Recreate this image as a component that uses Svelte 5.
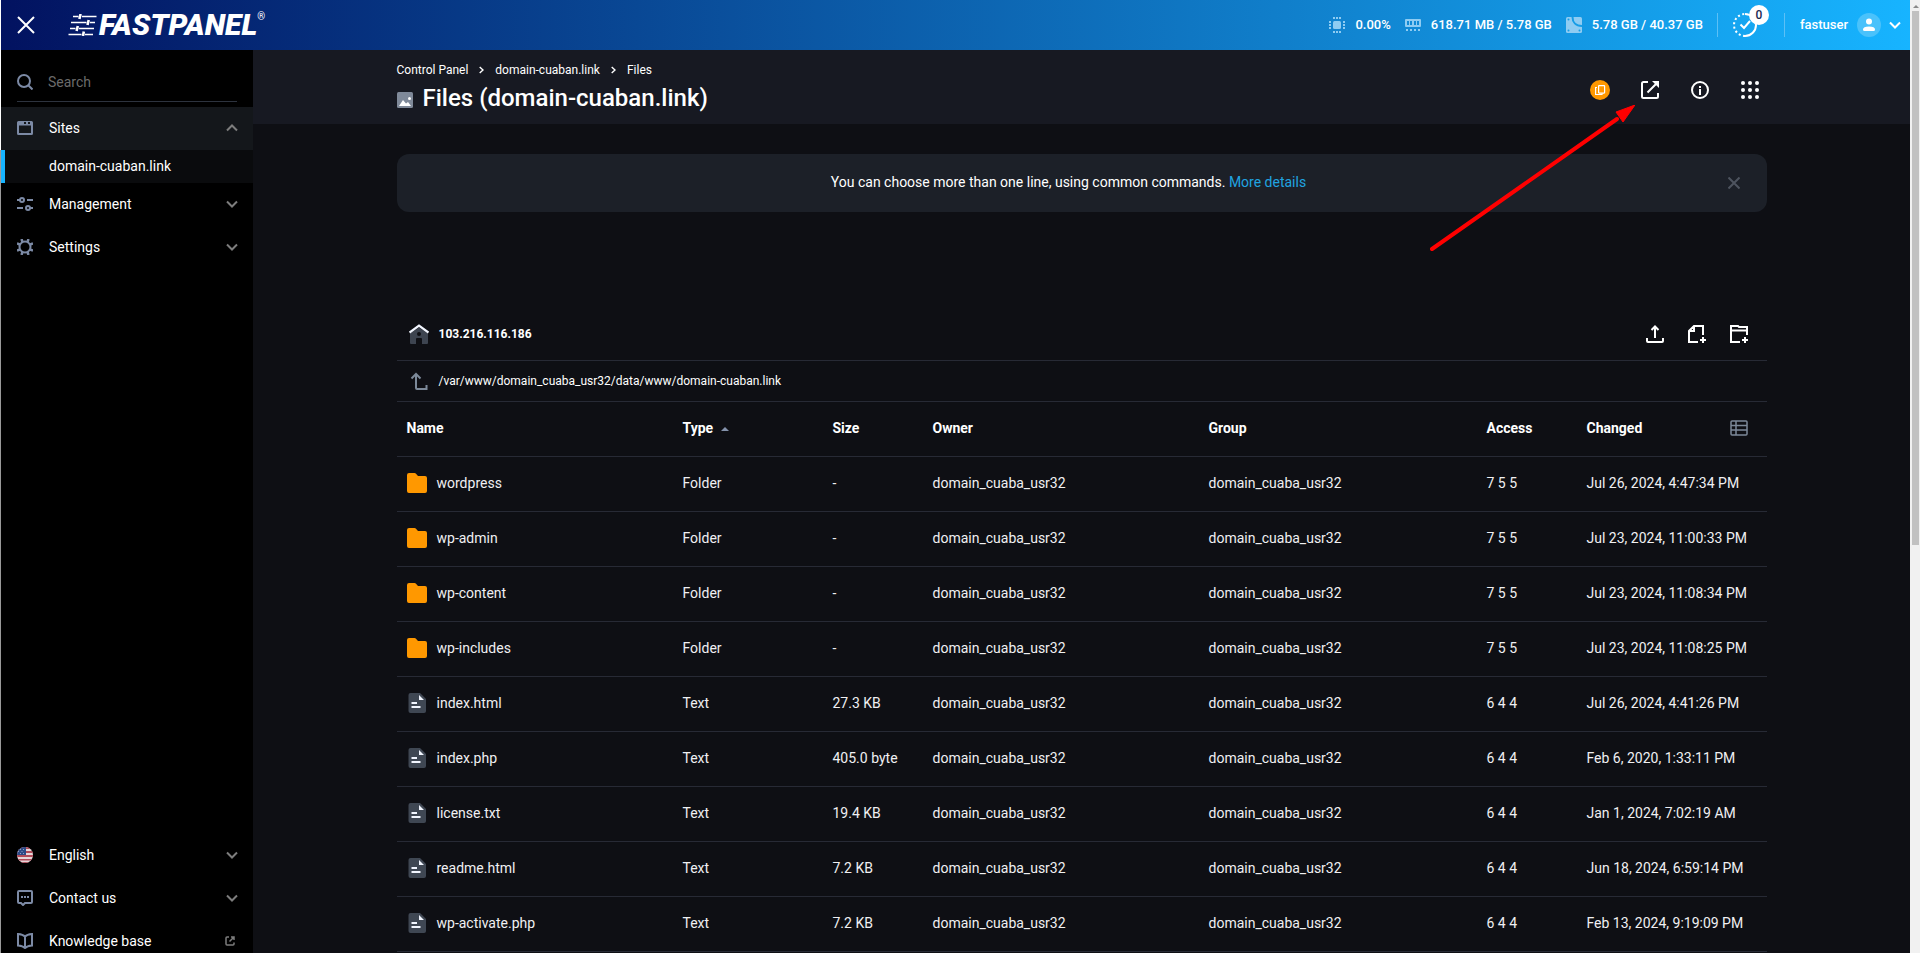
<script lang="ts">
  type FileRow = { name: string; type: string; size: string; access: string; changed: string };

  const owner = 'domain_cuaba_usr32';
  const rows: FileRow[] = [
    { name: 'wordpress', type: 'Folder', size: '-', access: '7 5 5', changed: 'Jul 26, 2024, 4:47:34 PM' },
    { name: 'wp-admin', type: 'Folder', size: '-', access: '7 5 5', changed: 'Jul 23, 2024, 11:00:33 PM' },
    { name: 'wp-content', type: 'Folder', size: '-', access: '7 5 5', changed: 'Jul 23, 2024, 11:08:34 PM' },
    { name: 'wp-includes', type: 'Folder', size: '-', access: '7 5 5', changed: 'Jul 23, 2024, 11:08:25 PM' },
    { name: 'index.html', type: 'Text', size: '27.3 KB', access: '6 4 4', changed: 'Jul 26, 2024, 4:41:26 PM' },
    { name: 'index.php', type: 'Text', size: '405.0 byte', access: '6 4 4', changed: 'Feb 6, 2020, 1:33:11 PM' },
    { name: 'license.txt', type: 'Text', size: '19.4 KB', access: '6 4 4', changed: 'Jan 1, 2024, 7:02:19 AM' },
    { name: 'readme.html', type: 'Text', size: '7.2 KB', access: '6 4 4', changed: 'Jun 18, 2024, 6:59:14 PM' },
    { name: 'wp-activate.php', type: 'Text', size: '7.2 KB', access: '6 4 4', changed: 'Feb 13, 2024, 9:19:09 PM' },
  ];

  let search = $state('');
  let sitesOpen = $state(true);
  let showHint = $state(true);
</script>

{#snippet chevron(up = false)}
  <svg class="chev" class:up width="12" height="8" viewBox="0 0 12 8" fill="none" stroke="currentColor" stroke-width="2"><path d="M1 1.5l5 5 5-5" /></svg>
{/snippet}

<div class="page">
  <div class="edge"></div>
  <div class="app">
    <header class="topbar">
      <button class="close" aria-label="Close menu">
        <svg width="18" height="18" viewBox="0 0 18 18" stroke="#fff" stroke-width="2"><path d="M1 1l16 16M17 1L1 17" /></svg>
      </button>
      <a class="logo" href="#home">
        <svg width="29" height="22" viewBox="0 0 29 22" fill="none" stroke="#fff">
          <g stroke-width="1.6">
            <path d="M5 2.5h5.500M14 2.500h14.500M3 8.500h15.500M22 8.500h5M2 14.500h5.500M11 14.500h15M.5 20.500h13M17 20.500h8" />
          </g>
          <g stroke-width="2.600"><path d="M12.600 0l-1.200 5M20.700 6l-1.200 5M9.800 12l-1.200 5M15.800 17.500l-.8 4.500" /></g>
        </svg>
        <span class="word">FASTPANEL</span><span class="reg">®</span>
      </a>
      <div class="stats">
        <span class="stat">
          <svg width="16" height="18" viewBox="0 0 16 18" fill="currentColor"><rect x="4" y="5" width="8" height="8" rx="1.500" /><path d="M4 1h2v2H4zM7 1h2v2H7zM10 1h2v2h-2zM4 15h2v2H4zM7 15h2v2H7zM10 15h2v2h-2zM0 5h2v2H0zM0 8h2v2H0zM0 11h2v2H0zM14 5h2v2h-2zM14 8h2v2h-2zM14 11h2v2h-2z" /></svg>
          0.00%
        </span>
        <span class="stat">
          <svg width="16" height="18" viewBox="0 0 16 18" fill="currentColor"><path fill-rule="evenodd" d="M1 3h14q1 0 1 1v6q0 1-1 1H1q-1 0-1-1V4q0-1 1-1zM2 5v4h2V5zM5 5v4h2V5zM9 5v4h2V5zM12 5v4h2V5zM1 13h2v2H1zM5 13h2v2H5zM9 13h2v2H9zM13 13h2v2h-2z" /></svg>
          618.71 MB / 5.78 GB
        </span>
        <span class="stat">
          <svg width="16" height="18" viewBox="0 0 16 18"><rect y="1" width="16" height="16" rx="1.500" fill="currentColor" /><path d="M6.500 1c0 5 3 9 9.500 9" fill="none" stroke="#169de6" stroke-width="2" /><g fill="#169de6"><circle cx="2.500" cy="3.500" r="1" /><circle cx="2.500" cy="14.500" r="1" /><circle cx="13.500" cy="14.500" r="1" /></g></svg>
          5.78 GB / 40.37 GB
        </span>
      </div>
      <button class="tasks" aria-label="Tasks">
        <svg width="26" height="26" viewBox="0 0 26 26" fill="none" stroke="#fff" stroke-width="2"><path d="M13 2a11 11 0 0 1 0 22" /><path d="M13 24a11 11 0 0 1 0-22" stroke-dasharray="2 2.500" /><path d="M8.500 12.500l3.500 3.500 6-7" /></svg>
        <span class="badge">0</span>
      </button>
      <button class="user">
        <span>fastuser</span>
        <span class="avatar"><svg width="12" height="14" viewBox="0 0 12 14" fill="#fff"><circle cx="6" cy="3.500" r="3" /><path d="M0 11.500Q0 8.500 6 8.500t6 3q0 1.500-1.500 1.500h-9Q0 13 0 11.500z" /></svg></span>
        {@render chevron()}
      </button>
    </header>

    <div class="body">
      <aside class="sidebar">
        <label class="search">
          <svg width="16" height="16" viewBox="0 0 16 16" fill="none" stroke="#7c8aa5" stroke-width="2"><circle cx="7" cy="7" r="6" /><path d="M11.500 11.500L15.500 15.500" /></svg>
          <input type="text" placeholder="Search" aria-label="Search" bind:value={search} />
        </label>
        <nav>
          <button class="item" class:open={sitesOpen} aria-expanded={sitesOpen} onclick={() => (sitesOpen = !sitesOpen)}>
            <svg width="16" height="16" viewBox="0 0 16 16"><path fill="#7c8aa5" fill-rule="evenodd" d="M1.500 1h13q1.500 0 1.500 1.500v11q0 1.500-1.500 1.500h-13Q0 15 0 13.500v-11Q0 1 1.500 1zM2 5.500V13h12V5.500z" /><path d="M7 2h2v2H7zM11 2h2v2h-2z" fill="#14171b" /></svg>
            <span>Sites</span>
            {@render chevron(sitesOpen)}
          </button>
          {#if sitesOpen}
            <a class="sub" href="#domain">domain-cuaban.link</a>
          {/if}
          <button class="item">
            <svg width="16" height="16" viewBox="0 0 16 16" fill="none" stroke="#7c8aa5" stroke-width="2"><circle cx="5" cy="4" r="2" /><circle cx="11" cy="12" r="2" /><path d="M0 4h3M10 4h6M0 12h6M13 12h3" /></svg>
            <span>Management</span>
            {@render chevron()}
          </button>
          <button class="item">
            <svg width="16" height="16" viewBox="0 0 16 16" fill="none" stroke="#7c8aa5"><circle cx="8" cy="8" r="5.500" stroke-width="2" /><path stroke-width="2.500" d="M5.500 3L4.500 0M10.500 3l1-3M5.500 13l-1 3M10.500 13l1 3M3 5.500L0 4.500M3 10.500l-3 1M13 5.500l3-1M13 10.500l3 1" /></svg>
            <span>Settings</span>
            {@render chevron()}
          </button>
        </nav>
        <div class="footer">
          <button class="item">
            <svg width="16" height="16" viewBox="0 0 16 16"><clipPath id="flag"><circle cx="8" cy="8" r="8" /></clipPath><g clip-path="url(#flag)"><path fill="#e6d5d8" d="M0 0h16v16H0z" /><path fill="#b04a58" d="M0 0h16v2H0zM0 4h16v2H0zM0 8h16v2H0zM0 12h16v1.500H0zM0 15h16v1H0z" /><path fill="#2c4a86" d="M0 0h9v8H0z" /><path fill="#8d9cc4" d="M3 2h1v1H3zM6 2h1v1H6zM1 4h1v1H1zM4.500 4h1v1h-1zM3 6h1v1H3zM6 6h1v1H6z" /></g></svg>
            <span>English</span>
            {@render chevron()}
          </button>
          <button class="item">
            <svg width="16" height="16" viewBox="0 0 16 16" fill="none" stroke="#7c8aa5" stroke-width="2"><path d="M2 1h12q1 0 1 1v10q0 1-1 1H8l-2 2-2-2H2q-1 0-1-1V2q0-1 1-1z" /><path d="M4 7h2M7 7h2M10 7h2" /></svg>
            <span>Contact us</span>
            {@render chevron()}
          </button>
          <a class="item" href="#knowledge">
            <svg width="16" height="16" viewBox="0 0 16 16" fill="none" stroke="#7c8aa5" stroke-width="2"><path d="M8 3.500Q6 1.500 1 1v11.500q5 .5 7 2.500 2-2 7-2.500V1q-5 .5-7 2.500V15" /></svg>
            <span>Knowledge base</span>
            <svg class="ext" width="10" height="10" viewBox="0 0 10 10" fill="none" stroke="currentColor" stroke-width="1.500"><path d="M4 1H2Q1 1 1 2v6q0 1 1 1h6q1 0 1-1V6.500M4.500 5.500L9 1M6 1h3v3" /></svg>
          </a>
        </div>
      </aside>

      <main>
        <div class="head">
          <div class="inner">
            <div class="titles">
              <nav class="crumbs" aria-label="Breadcrumb">
                <a href="#panel">Control Panel</a>
                <svg width="5" height="8" viewBox="0 0 5 8" fill="none" stroke="#fff" stroke-width="1.400"><path d="M.7 1L4 4 .7 7" /></svg>
                <a href="#domain">domain-cuaban.link</a>
                <svg width="5" height="8" viewBox="0 0 5 8" fill="none" stroke="#fff" stroke-width="1.400"><path d="M.7 1L4 4 .7 7" /></svg>
                <span>Files</span>
              </nav>
              <h1>
                <svg width="16" height="16" viewBox="0 0 16 16"><rect width="16" height="16" rx="1.500" fill="#7f8999" /><path d="M2 14l4-6 3 3.500 2-1.500 3 4z" fill="#fff" /><circle cx="12.500" cy="6.500" r="1.500" fill="#fff" /></svg>
                Files (domain-cuaban.link)
              </h1>
            </div>
            <div class="actions">
              <button aria-label="Copy"><svg width="20" height="20" viewBox="0 0 20 20" fill="none"><circle cx="10" cy="10" r="10" fill="#ff9800" /><g stroke="#fff" stroke-width="1.200"><rect x="8.600" y="5.600" width="6" height="7.500" rx=".5" /><path d="M7 7.500H5.600v7H12V13.500" /></g></svg></button>
              <button aria-label="Open site"><svg width="18" height="18" viewBox="0 0 18 18" fill="none" stroke="#fff" stroke-width="2"><path d="M7 1H2.500Q1 1 1 2.500v13Q1 17 2.500 17h13q1.500 0 1.500-1.500V12M6.500 11.500L16 2" /><path d="M11 0h7v7z" fill="#fff" stroke="none" /></svg></button>
              <button aria-label="Info"><svg width="18" height="18" viewBox="0 0 18 18" fill="none" stroke="#fff" stroke-width="2"><circle cx="9" cy="9" r="8" /><path d="M9 8v6M9 5v2" stroke-width="2" /></svg></button>
              <button aria-label="All sections"><svg width="18" height="18" viewBox="0 0 18 18" fill="#fff">{#each [2, 9, 16] as y}{#each [2, 9, 16] as x}<circle cx={x} cy={y} r="2" />{/each}{/each}</svg></button>
            </div>
          </div>
        </div>

        <div class="content">
          {#if showHint}
            <div class="hint">
              <p>You can choose more than one line, using common commands. <a href="#details">More details</a></p>
              <button aria-label="Dismiss" onclick={() => (showHint = false)}>
                <svg width="12" height="12" viewBox="0 0 12 12" stroke="#4e545f" stroke-width="2"><path d="M.5 .5l11 11M11.500 .5l-11 11" /></svg>
              </button>
            </div>
          {/if}

          <section class="files">
            <div class="host">
              <svg width="20" height="20" viewBox="0 0 20 20"><path fill="#3d4450" fill-rule="evenodd" d="M10 3.500l9 6V19q0 1-1 1h-5v-5q0-1-1-1H8q-1 0-1 1v5H2q-1 0-1-1V9.500zM10 8a2 2 0 1 0 0 4 2 2 0 0 0 0-4z" /><path d="M.5 8.500L10 1.500l9.500 7" fill="none" stroke="#f2f6ff" stroke-width="2.200" /></svg>
              <strong>103.216.116.186</strong>
              <div class="tools">
                <button aria-label="Upload"><svg width="18" height="18" viewBox="0 0 18 18" fill="none" stroke="#fff" stroke-width="2"><path d="M1 13v3q0 1 1 1h14q1 0 1-1v-3M9 13V2M5.500 5L9 1.500 12.500 5" /></svg></button>
                <button aria-label="New file"><svg width="18" height="18" viewBox="0 0 18 18" fill="none" stroke="#fff" stroke-width="2"><path d="M10 17H1V6l5-5h9v9M6 1v5H1M15 12v6M12 15h6" /></svg></button>
                <button aria-label="New folder"><svg width="18" height="18" viewBox="0 0 18 18" fill="none" stroke="#fff" stroke-width="2"><path d="M10 17H1V1h7l1 1h8v8M1 5.500h16M15 12v6M12 15h6" /></svg></button>
              </div>
            </div>
            <div class="path">
              <svg width="20" height="20" viewBox="0 0 20 20" fill="none" stroke="#7c8999" stroke-width="2"><path d="M7 3v14q0 1 1 1h9.500v-4M2.500 7.500L7 3l4.500 4.500" /></svg>
              <span>/var/www/domain_cuaba_usr32/data/www/domain-cuaban.link</span>
            </div>
            <table>
              <colgroup>
                <col class="c-wide" /><col class="c-type" /><col class="c-small" /><col class="c-wide" /><col /><col class="c-small" /><col class="c-date" />
              </colgroup>
              <thead>
                <tr>
                  <th>Name</th>
                  <th>Type <svg class="sort" width="8" height="4" viewBox="0 0 8 4" fill="#8492ab"><path d="M0 4l4-4 4 4z" /></svg></th>
                  <th>Size</th>
                  <th>Owner</th>
                  <th>Group</th>
                  <th>Access</th>
                  <th>
                    <div class="last">
                      Changed
                      <button aria-label="Columns"><svg width="18" height="16" viewBox="0 0 18 16" fill="none" stroke="#7c8999" stroke-width="1.500"><rect x="1" y="1" width="16" height="14" rx="1" /><path d="M1 5.500h16M1 10h16M6 1v14" /></svg></button>
                    </div>
                  </th>
                </tr>
              </thead>
              <tbody>
                {#each rows as row (row.name)}
                  <tr>
                    <td>
                      <div class="name">
                        {#if row.type === 'Folder'}
                          <svg width="20" height="20" viewBox="0 0 20 20"><path d="M2 0h5.500q1 0 1.500.8L11 3h7q2 0 2 2v13q0 2-2 2H2q-2 0-2-2V2q0-2 2-2z" fill="#ff9800" /></svg>
                        {:else}
                          <svg width="20" height="20" viewBox="0 0 20 20"><path d="M3.500 0H13l6 6v12q0 2-2 2H3.500q-2 0-2-2V2q0-2 2-2z" fill="#3f4753" /><path d="M12 2v5h5zM4.500 9H10v2H4.500zM4.500 13h9v2h-9z" fill="#f2f6ff" /></svg>
                        {/if}
                        <span>{row.name}</span>
                      </div>
                    </td>
                    <td>{row.type}</td>
                    <td>{row.size}</td>
                    <td>{owner}</td>
                    <td>{owner}</td>
                    <td>{row.access}</td>
                    <td>{row.changed}</td>
                  </tr>
                {/each}
              </tbody>
            </table>
          </section>
        </div>

        <!-- pointer to the open-site button -->
        <svg class="pointer" width="206" height="146" viewBox="0 0 206 146">
          <path d="M3 144L188 14" stroke="#f00" stroke-width="4" stroke-linecap="round" />
          <path d="M206 0l-19 7 7 10z" fill="#f00" stroke="#f00" />
        </svg>
      </main>
    </div>
  </div>
  <div class="scroll"><i class="tick"></i><div class="thumb"></div></div>
</div>

<style>
  :global(body) { background: #0e0f14; }
  .page, .page * { box-sizing: border-box; }
  .page {
    display: flex; height: 100vh; overflow: hidden;
    font-family: Roboto, "Liberation Sans", sans-serif; font-size: 14px; line-height: 20px; color: #fff;
  }
  .edge { flex: none; width: 1px; background: linear-gradient(#fff 150px, #9a9a9a 150px); }
  .app { flex: 1; min-width: 0; display: flex; flex-direction: column; }
  button { font: inherit; color: inherit; background: none; border: 0; padding: 0; cursor: pointer; }
  a { color: inherit; text-decoration: none; }
  svg { display: block; flex: none; }
  .chev.up { transform: rotate(180deg); }

  .topbar {
    flex: none; height: 50px; display: flex; align-items: center; padding: 0 9px 0 16px;
    background: linear-gradient(90deg, #021260, #17b4ff);
    font-size: 13px; font-weight: 500;
  }
  .logo { display: flex; align-items: center; margin-left: 33px; }
  .word { margin-left: 2px; font-size: 30px; font-weight: 900; font-style: italic; line-height: 32px; }
  .reg { align-self: flex-start; font-size: 10px; line-height: 16px; font-weight: 400; }
  .stats { display: flex; gap: 14px; margin-left: auto; }
  .stat { display: flex; align-items: center; gap: 10px; }
  .stat svg { color: #8fccf2; }
  .tasks {
    position: relative; margin-left: 14px; padding: 0 26px 0 14px; height: 24px;
    display: flex; align-items: center;
    border: solid #5cc0f6; border-width: 0 1px;
  }
  .badge {
    position: absolute; left: 31px; top: -8px; width: 20px; height: 20px; border-radius: 50%;
    background: #fff; color: #1b2850; font-size: 12px; line-height: 20px; text-align: center;
  }
  .user { display: flex; align-items: center; gap: 8px; margin-left: 15px; }
  .avatar {
    width: 24px; height: 24px; border-radius: 50%; background: #4ac2fb; margin-left: 1px;
    display: flex; align-items: center; justify-content: center;
  }

  .body { flex: 1; min-height: 0; display: flex; }
  .sidebar { flex: none; width: 252px; background: #000; display: flex; flex-direction: column; }
  .search {
    flex: none; display: flex; align-items: center; gap: 15px; height: 38px;
    margin: 14px 16px 5px; padding-bottom: 2px; border-bottom: 1px solid #2d333e;
  }
  .search input {
    flex: 1; min-width: 0; border: 0; outline: 0; padding: 0; background: none;
    font: inherit; color: #fff;
  }
  .search input::placeholder { color: #6b6b6b; opacity: 1; }
  .item {
    width: 100%; height: 43px; display: flex; align-items: center; gap: 16px;
    padding: 0 15px 2px 16px; text-align: left;
  }
  .item span { flex: 1; }
  .item.open { background: #14171b; }
  .item .chev, .item .ext { color: #7d7d7d; }
  .item .ext { margin-right: 3px; }
  .sub {
    display: block; height: 33px; line-height: 33px; padding-left: 44px;
    background: #0a0b0d; border-left: 4px solid #17b4ff;
  }
  .footer { margin-top: auto; margin-bottom: -10px; }

  main { flex: 1; min-width: 0; position: relative; overflow: hidden; background: #0e0f14; }
  .head { height: 74px; background: #171922; }
  .inner, .content { width: 100%; max-width: 1370px; margin: 0 auto; }
  .inner { display: flex; justify-content: space-between; padding-top: 10px; }
  .crumbs { display: flex; align-items: center; gap: 11px; font-size: 12px; line-height: 20px; }
  h1 { margin: 2px 0 0; display: flex; align-items: center; gap: 10px; font-size: 24px; line-height: 32px; font-weight: 500; }
  h1 svg { margin-top: 4px; }
  .actions { display: flex; gap: 16px; height: 60px; align-items: center; }
  .actions button { width: 34px; height: 34px; display: flex; align-items: center; justify-content: center; }

  .content { padding-top: 30px; }
  .hint {
    display: flex; align-items: center; min-height: 58px; padding: 0 27px 0 13px;
    background: #1c2028; border-radius: 12px;
  }
  .hint p { flex: 1; margin: 0; padding-bottom: 2px; text-align: center; }
  .hint a { color: #20a4e0; }

  .files { margin-top: 94px; }
  .host, .path {
    display: flex; align-items: center; gap: 10px; padding: 0 19px 0 12px;
    font-size: 12px; border-bottom: 1px solid #272a35;
  }
  .host { height: 55px; padding-top: 2px; }
  .path { height: 41px; }
  .host strong { font-weight: 700; }
  .tools { display: flex; gap: 24px; margin-left: auto; }
  table { width: 100%; table-layout: fixed; border-collapse: separate; border-spacing: 0; }
  th, td { height: 55px; padding: 0 10px 2px; text-align: left; border-bottom: 1px solid #272a35; white-space: nowrap; }
  td { color: #f0f0f2; }
  th { font-weight: 700; }
  .c-wide { width: 276px; }
  .c-type { width: 150px; }
  .c-small { width: 100px; }
  .c-date { width: 190px; }
  .sort { display: inline-block; margin: 0 0 2px 4px; }
  .last { display: flex; justify-content: space-between; align-items: center; padding-right: 9px; }
  .name { display: flex; align-items: center; gap: 10px; }

  .pointer { position: absolute; right: 275px; top: 55px; pointer-events: none; }
  .scroll { flex: none; width: 10px; background: #f1f1f1; padding: 5px 1px 0 2px; }
  .tick { display: block; width: 0; margin: 0 auto 3px; border: 3px solid transparent; border-top: 0; border-bottom-color: #8a8a8a; }
  .thumb { height: 534px; background: #c1c1c1; }
</style>
